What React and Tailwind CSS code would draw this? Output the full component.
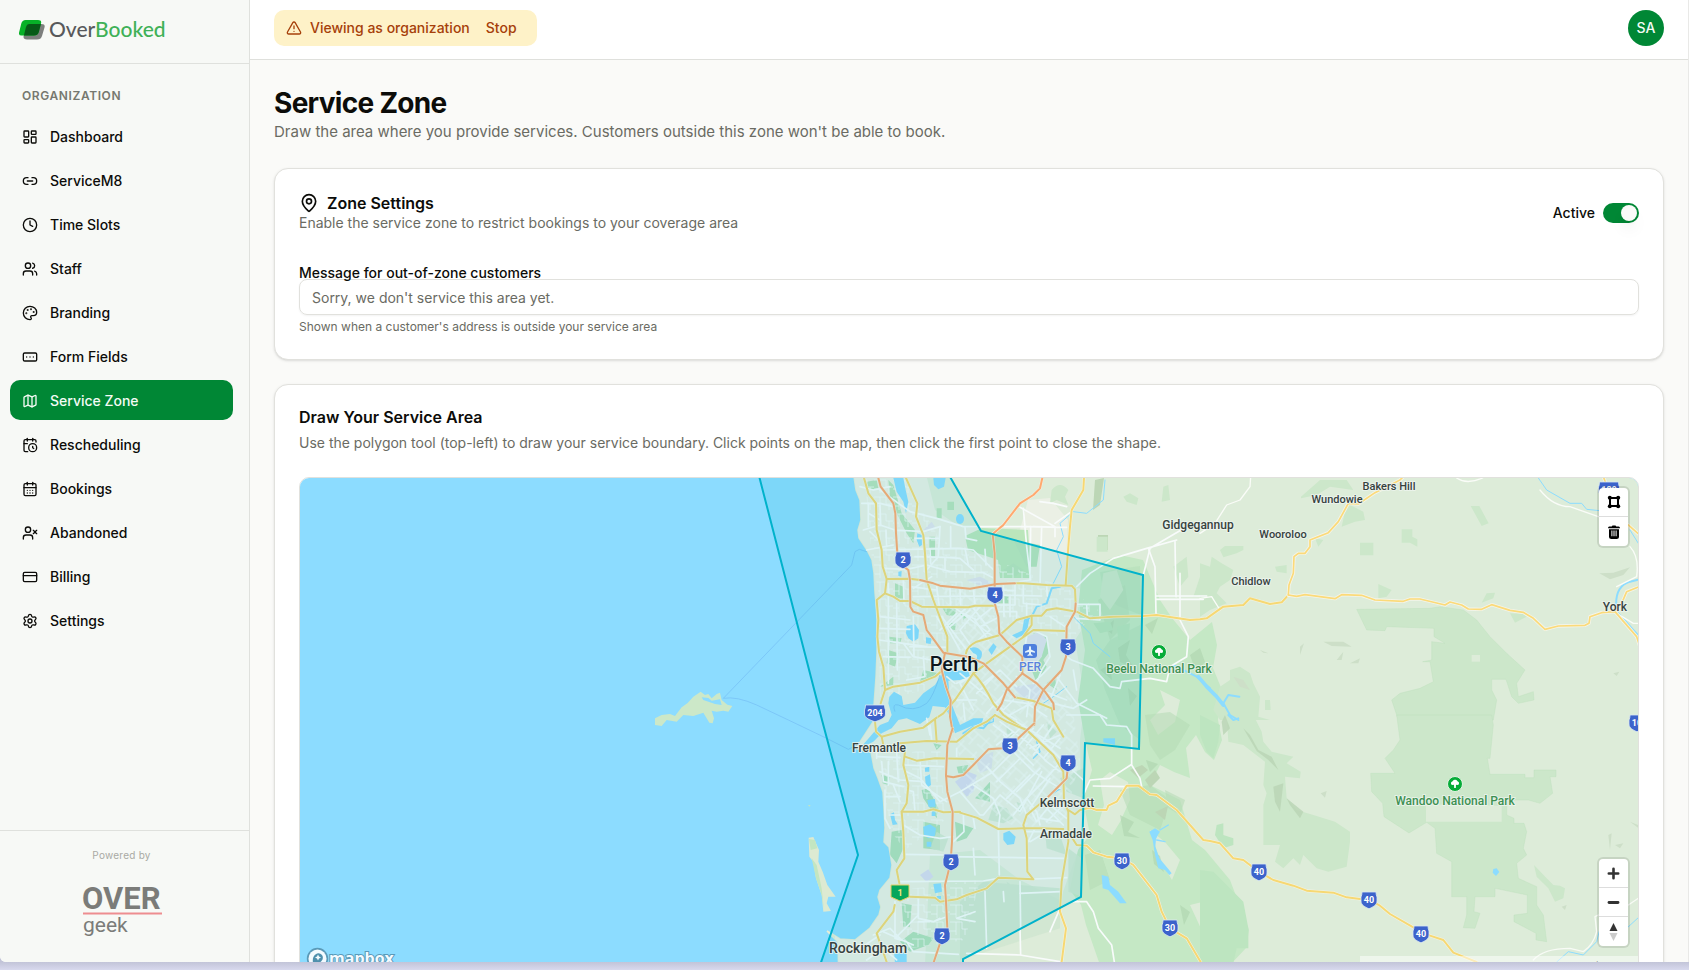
import React, { useState } from "react";
import {
  LayoutDashboard,
  Link2,
  Clock,
  Users,
  Palette,
  RectangleEllipsis,
  Map as MapIcon,
  CalendarClock,
  CalendarDays,
  UserX,
  CreditCard,
  Settings,
  TriangleAlert,
  MapPin,
} from "lucide-react";

const navItems = [
  { label: "Dashboard", icon: LayoutDashboard },
  { label: "ServiceM8", icon: Link2 },
  { label: "Time Slots", icon: Clock },
  { label: "Staff", icon: Users },
  { label: "Branding", icon: Palette },
  { label: "Form Fields", icon: RectangleEllipsis },
  { label: "Service Zone", icon: MapIcon, active: true },
  { label: "Rescheduling", icon: CalendarClock },
  { label: "Bookings", icon: CalendarDays },
  { label: "Abandoned", icon: UserX },
  { label: "Billing", icon: CreditCard },
  { label: "Settings", icon: Settings },
];

function BrandMark() {
  return (
    <svg viewBox="0 0 26 20" className="h-5 w-[26px]" aria-hidden="true">
      <path d="M10 4h12.500q4 0 3 3.500l-2.500 8.500q-1 3.500-5 3.500H8q-4.500 0-3.200-4L7 7q.8-3 3-3z" fill="#7d7f7d" />
      <path d="M6.500 0H19q4 0 3 3.500L19.800 12q-1 3.500-5 3.500H2.500q-3.300 0-2.300-3.500L2.300 3.500Q3.300 0 6.500 0z" fill="#07b127" />
      <path d="M10 4h11.900l-2.100 8q-1 3.500-5 3.500H4.900L7 7q.8-3 3-3z" fill="#075a17" />
    </svg>
  );
}

function Sidebar() {
  return (
    <aside className="flex w-[250px] shrink-0 flex-col border-r border-[#dfe1dd] bg-[#f7f9f6]">
      <div className="flex h-16 shrink-0 items-center gap-1 border-b border-[#dfe1dd] pb-1 pl-[19px]">
        <BrandMark />
        <span className="pb-0.5 text-[21px] leading-6 font-medium text-[#58595b] [font-family:Lato,sans-serif]">
          Over<span className="text-[#3fb157]">Booked</span>
        </span>
      </div>
      <nav className="flex-1 pt-[18px] pr-4 pl-[10px]" aria-label="Organization">
        <h2 className="px-3 py-1 text-xs leading-5 font-semibold tracking-wider text-[#76786f] uppercase">Organization</h2>
        <ul className="mt-1.5 flex flex-col gap-1">
          {navItems.map(({ label, icon: Icon, active }) => (
            <li key={label}>
              <a
                href="#"
                aria-current={active ? "page" : undefined}
                className={
                  active
                    ? "flex h-10 items-center gap-3 rounded-[10px] bg-[#008735] px-3 pt-0.5 text-sm font-medium text-[#f4fbf5]"
                    : "flex h-10 items-center gap-3 rounded-[10px] px-3 pt-0.5 text-sm font-medium text-[#0c0c09]"
                }
              >
                <Icon className="size-4" />
                {label}
              </a>
            </li>
          ))}
        </ul>
      </nav>
      <div className="flex h-[132px] shrink-0 flex-col items-center border-t border-[#dfe1dd] pt-4 pr-4 pl-[10px]">
        <p className="text-[10px] leading-4 tracking-wide text-[#a9aaa4]">Powered by</p>
        <svg viewBox="0 0 80 60" className="mt-4 h-[60px] w-20" role="img" aria-label="OVER geek">
          <text x="0" y="30" fontSize="31" fontWeight="700" fill="#7b7c79" fontFamily="Roboto, sans-serif">OVER</text>
          <path d="M1 34.500h79" stroke="#ee8d90" strokeWidth="2" />
          <text x="1" y="53" fontSize="21" fill="#7b7c79" fontFamily="Roboto, sans-serif">geek</text>
        </svg>
      </div>
    </aside>
  );
}

function Header() {
  return (
    <header className="flex h-[60px] shrink-0 items-start justify-between border-b border-[#dfe0dc] bg-white px-6 pt-[10px]">
      <div className="flex h-9 items-center gap-2 rounded-[10px] bg-[#fef2c8] px-3 text-sm font-medium text-[#a6400a]">
        <TriangleAlert className="size-4" />
        <span>Viewing as organization</span>
        <button type="button" className="px-2">Stop</button>
      </div>
      <button type="button" aria-label="Account menu" className="size-9 rounded-full bg-[#008735] text-sm font-medium text-[#f4fbf5]">
        SA
      </button>
    </header>
  );
}

const streets = {
  north: [
    "M60,60L150,125L230,145L310,170L500,170",
    "M5,100L60,100L100,110",
    "M10,180L60,165L105,180L190,185L240,170",
    "M20,240L100,225M65,240L300,235L340,240L390,290L402,300",
    "M70,295L140,298L200,285L270,305L370,308L402,325",
    "M240,170L235,260L200,300M315,235L325,285M272,170L272,235M375,238L378,285M315,172L318,205L350,212",
    "M50,390L60,440L150,450M55,475L150,478M57,510L130,520L200,530M130,520L160,560L240,575M70,560L150,562M150,530L260,532",
    "M85,340L85,640M110,400L112,600M130,330L132,400M160,440L162,560M190,560L195,620L140,630",
    "M150,350L230,360M230,350L238,410M270,355L272,408M300,358L302,405M340,356L345,407M160,380L400,378",
    "M320,412L260,470L300,540M340,415L390,480L350,515M400,410L350,450L310,430M280,410L400,500M360,410L300,480L335,530M245,440L320,540M410,445L360,470",
    "M345,450L385,510M270,470L330,420M240,480L290,430M230,440L265,500",
    "M465,340L465,405L410,405M490,345L490,400L545,405M512,170L510,330L480,335M490,115L500,230L512,330M545,170L540,345",
    "M480,112L585,170L585,200M500,170L600,172M585,160L630,128M520,170L620,172M540,95L580,100L620,110",
    "M850,315L870,235L980,170M650,350L690,310L760,265L860,235L950,210",
    "M865,235L885,290L888,430M945,215L948,380M888,378L1040,378M888,388L1030,388M960,310L960,440",
    "M960,450L985,500L980,560L930,590L920,635L870,625L785,635L780,655L750,650L700,595L635,570L620,560",
    "M650,403L720,403L720,450L650,445M680,403L682,440",
    "M570,440L615,470M520,480L560,500L570,560L545,600L530,640M500,500L490,560",
    "M590,620L620,660L650,700L740,745M580,700L640,715L680,690M600,615L570,690M555,665L620,690M640,600L650,660",
    "M300,610L430,720L460,690M345,610L300,640L340,720M370,640L420,600L470,650M400,620L350,670M290,640L330,620M260,620L285,640M380,730L480,620M290,690L350,690M310,700L315,750",
    "M430,690L500,700L560,740M470,620L510,660L500,740M420,720L470,750M440,740L530,690M570,590L520,640",
    "M0,50L40,60L90,50M25,100L25,170M60,105L62,165M78,180L80,230M30,185L60,215M25,130L60,150",
    "M165,260L255,262L255,300M215,320L160,355M260,262L300,265L340,300M165,205L235,205M210,235L212,280",
    "M420,360L465,362M410,375L545,378M430,345L432,440M450,375L450,440M410,425L470,425L470,450M500,400L500,437M560,350L562,378",
  ],
  south: [
    "M55,125L120,128M60,170L120,195L190,200M65,140L70,200L130,215M75,225L75,310L90,340M75,245L120,245M50,95L50,130M85,140L85,210",
    "M140,170L180,190L240,260L300,230L360,300L370,300L420,240L480,290L545,170M180,135L185,210L260,260",
    "M130,150L250,155M140,225L160,230L165,290M210,30L215,75M200,10L210,60M290,100L290,130L260,130",
    "M300,230L400,170L420,150L460,110L520,170L600,220M340,210L400,250L420,300L415,340M380,155L420,200L480,250L500,300",
    "M420,20L500,80L560,140L600,170M460,50L410,90M490,30L440,80M520,40L470,100M550,30L500,90M580,30L520,120M600,70L550,130M620,120L550,200L500,250L460,300",
    "M510,100L600,60M430,60L520,150M470,20L600,100M520,50L600,130M400,30L440,60M540,160L470,230M570,190L510,280L530,320L570,270L620,310",
    "M500,250L530,290L540,330M560,280L610,330M540,310L600,320M580,250L600,280L560,320M510,180L440,250M480,130L410,200",
    "M130,330L180,360L240,370L280,365M130,418L260,420M265,425L620,430M310,300L312,350L280,380M340,310L345,340M415,345L418,480M340,400L345,480",
    "M120,500L370,498L415,490M520,492L620,488M480,500L482,640M375,530L380,700M345,590L290,610L345,620M430,530L432,560",
    "M175,550L175,610L220,620L240,610M175,600L105,670M105,560L105,670L140,680L160,710L295,718M220,620L260,605M70,650L160,690M175,620L210,620",
    "M480,535L600,530M500,350L620,350M510,380L560,350L600,360M525,340L505,380",
    "M640,560L680,560L700,590L715,640L755,690L763,741M570,650L600,580M320,715L480,720L600,740M480,640L482,720",
    "M620,0L720,0L740,30L800,35L815,60L815,150L840,190L845,215M690,195L750,190L812,150M700,213L800,215M620,150L670,195M690,195L670,240",
    "M80,100L110,110L115,200M100,210L120,260M90,300L120,300",
    "M40,660L90,640L120,670M0,700L60,660M20,735L70,700L110,735",
  ],
};

const yellowNorth = [
  "M12,24L25,70L48,100L50,180L65,240L68,290L80,327L75,370L50,390L55,450L52,500L57,545L70,590L75,660L62,700",
  "M138,24L172,100L168,140L190,195L195,250L200,330L220,390L262,500L262,550",
  "M80,327L150,326L180,330",
  "M75,370L100,380L120,393L150,393L185,410L325,412L345,407L404,407",
  "M465,340L490,340L560,345L635,347L645,358L647,400",
  "M672,24L670,60L635,120L630,170L625,230L617,345",
  "M318,550Q320,530 350,515L420,495L470,450L515,437L545,437L560,420L590,415L650,425L690,445L760,440L850,438L890,435L990,450L1020,448L1040,445L1090,410L1150,405L1170,385L1230,402L1265,397L1285,375",
  "M620,483L520,480L450,530L380,580L340,610L285,690L250,730L220,750",
  "M515,437L515,465L490,500",
  "M75,660L100,650L180,638L225,620L248,600",
  "M340,610Q370,640 400,700L430,735L480,770",
  "M465,682L520,693L575,715L580,750L610,800",
];
const yellowSouth = [
  "M45,20L48,50L65,65L120,50L190,38L230,8M65,65L70,90M225,12L230,80",
  "M120,85L200,78L290,80L340,40L380,20L405,0",
  "M135,125L170,137L225,130L340,132",
  "M135,110L130,150L145,210L140,265L125,290L130,350L133,430L110,465L118,505",
  "M125,290L190,290L220,283L250,292L300,290M300,293L350,308L415,342L490,340L545,340L610,342",
  "M104,570L100,590L50,655L80,741",
  "M150,545L225,548L240,560L290,553L320,540L380,520L415,488L520,493L502,470L500,370L490,330L500,300L560,250",
  "M405,0L440,20L500,45L580,120L610,170L612,260L625,290L625,380L605,500L600,590L618,640L605,741",
  "M625,285L645,298L660,285L690,278L710,285L740,285L745,272L770,260L800,212L835,212L870,238L890,240L950,285L990,330L1030,375L1050,378L1080,385L1120,430L1150,435L1196,470L1240,495L1300,512L1340,527L1420,533L1460,547L1500,552L1528,555L1560,572L1590,597L1656,635L1710,662L1750,675L1780,713L1850,741",
  "M625,350L650,390L680,392L700,412L740,425L786,430L820,450L890,540L905,590L930,640L980,670L1022,741",
];
const yellowEast = [
  "M265,375L267,345L280,310L282,260L295,250L315,250L330,230L330,210L385,188L415,155L445,100L475,102L525,68L600,30L610,20",
  "M265,375L290,379L315,374L405,386L425,374L485,376L525,390L610,394L630,387L660,387L735,405L750,396L785,405L805,417L845,418L875,404L930,421L970,427L1000,445L1035,478L1075,468L1155,466L1167,460L1170,440L1205,428L1245,425L1310,500L1318,525",
  "M1210,20L1225,60M1285,165L1318,194M1245,425L1265,400L1280,365L1318,350",
];
const orangeNorth = [
  "M55,24L62,50L100,100L106,130L108,190L112,250L118,280L145,300L150,330L151,410L160,425L190,435L200,480L215,500L250,548L330,562L370,580L430,640L465,682",
  "M255,548L245,600L258,650L272,690L270,740L278,785",
  "M180,330L220,340L240,347L330,356L410,342L465,340",
  "M547,24L540,55L520,75L480,100L430,165L398,192L404,250L404,400L415,440L418,490L440,515L487,560L487,610L440,660L425,700L412,720",
  "M487,610L530,640L555,665L580,700L582,718",
  "M647,400L645,425L620,470L618,560L605,600L550,660L525,710L523,765",
];
const orangeSouth = [
  "M278,40L262,90L258,180L262,230L278,290L276,380L272,440L265,470L255,510L258,560L262,640L245,670L220,745",
  "M523,25L475,70L450,95L425,100L385,103L340,150L310,180L280,187L258,183",
  "M622,170L620,190L565,245",
];

const shields = [
  { x: 903, y: 560, n: "2" },
  { x: 995, y: 595, n: "4" },
  { x: 1068, y: 647, n: "3" },
  { x: 875, y: 713, n: "204", wide: true },
  { x: 1010, y: 746, n: "3" },
  { x: 1068, y: 763, n: "4" },
  { x: 951, y: 862, n: "2" },
  { x: 942, y: 936, n: "2" },
  { x: 1122, y: 861, n: "30" },
  { x: 1170, y: 928, n: "30" },
  { x: 1259, y: 872, n: "40" },
  { x: 1369, y: 900, n: "40" },
  { x: 1421, y: 934, n: "40" },
  { x: 1637, y: 723, n: "10" },
  { x: 1609, y: 490, n: "120", wide: true },
];

const places = [
  { x: 954, y: 671, t: "Perth", s: 20, c: "#0d171d", w: 500 },
  { x: 879, y: 752, t: "Fremantle", s: 12 },
  { x: 868, y: 953, t: "Rockingham", s: 14 },
  { x: 1067, y: 807, t: "Kelmscott", s: 12 },
  { x: 1066, y: 838, t: "Armadale", s: 12 },
  { x: 1198, y: 529, t: "Gidgegannup", s: 12 },
  { x: 1283, y: 538, t: "Wooroloo", s: 11 },
  { x: 1337, y: 503, t: "Wundowie", s: 11 },
  { x: 1389, y: 490, t: "Bakers Hill", s: 11 },
  { x: 1251, y: 585, t: "Chidlow", s: 11 },
  { x: 1615, y: 611, t: "York", s: 12 },
  { x: 1159, y: 673, t: "Beelu National Park", s: 12, c: "#3d9052" },
  { x: 1455, y: 805, t: "Wandoo National Park", s: 12, c: "#3d9052" },
  { x: 1030, y: 671, t: "PER", s: 12, c: "#5a83dd" },
];

function Roads({ paths, color, width, casing, casingWidth }) {
  return (
    <g fill="none" strokeLinejoin="round" strokeLinecap="round">
      {casing && paths.map((d) => <path key={"c" + d} d={d} stroke={casing} strokeWidth={casingWidth} />)}
      {paths.map((d) => (
        <path key={d} d={d} stroke={color} strokeWidth={width} />
      ))}
    </g>
  );
}

function Shield({ x, y, n, wide }) {
  const w = wide ? 10.5 : 8;
  return (
    <g transform={`translate(${x} ${y})`}>
      <path
        d={`M${-w + 1},-8H${w - 1}Q${w - 1},-5 ${w},-3V1C${w},5 ${w / 2},7 0,8.800C${-w / 2},7 ${-w},5 ${-w},1V-3Q${-w + 1},-5 ${-w + 1},-8Z`}
        fill="#3c63cb"
        stroke="#dbe8f2"
        strokeWidth=".8"
      />
      <text y="3" textAnchor="middle" fontSize="9" fontWeight="700" fill="#fff">{n}</text>
    </g>
  );
}

function ParkPin({ x, y }) {
  return (
    <g transform={`translate(${x} ${y})`}>
      <circle r="7.500" fill="#07ac39" stroke="#e6f3e3" strokeWidth="1" />
      <path d="M-4,0Q-4.500,-2.200 -2.400,-2.700Q-1.800,-4.500 0,-4.300Q2,-4.500 2.500,-2.700Q4.500,-2.200 4,0Q3.500,1.300 1,.8L.8,4H-.8L-1,.8Q-3.500,1.300 -4,0Z" fill="#fff" />
    </g>
  );
}

function ZoneMap() {
  const nw = "translate(640 470) scale(.33333)";
  const n = "translate(860 470) scale(.33333)";
  const sw = "translate(640 715) scale(.33333)";
  const s = "translate(860 715) scale(.33333)";
  const e = "translate(1200 470) scale(.33333)";
  const se = "translate(1200 715) scale(.33333)";
  const zone = "M757,468L822,720L858,855L817,974L963,974V959L1081,897L1085,743L1139,749L1143,575L981,531L945,468Z";
  const coast =
    "M853,470L856,490L860,500L861,520L858,530L859,538L867,550L872,560L874,573L875,593L876,603L877,620L877,653L876,677L874,705L873,722L860,742L855,748L871,752L874,768L878,778L883,792L884,808L885,828L884,842L889,847L892,865L890,878L880,890L878,897L881,907L879,915L870,928L855,940L840,939L827,931L838,942L839,990H1640V470Z";
  return (
    <svg
      viewBox="300 478 1338 498"
      preserveAspectRatio="xMinYMin slice"
      className="block h-full w-full"
      role="img"
      aria-label="Map of the service area around Perth"
      fontFamily="Roboto, sans-serif"
    >
      <defs>
        <pattern id="grid-a" width="19" height="17" patternUnits="userSpaceOnUse">
          <path d="M0,4H12M6,4V17M12,4V11H19M0,13H6M15,11V17" stroke="#f7fafa" strokeWidth=".7" fill="none" />
        </pattern>
        <pattern id="grid-b" width="17" height="19" patternUnits="userSpaceOnUse" patternTransform="rotate(42)">
          <path d="M0,5H17M5,0V12M11,5V19M0,13H11" stroke="#f7fafa" strokeWidth=".8" fill="none" />
        </pattern>
        <clipPath id="land"><path d={coast} /></clipPath>
      </defs>

      <path d="M300,470H1640V990H300Z" fill="#8cdcff" />
      <path d={coast} fill="#ddecd9" stroke="#e6ecd6" strokeWidth="1.500" />

      <g clipPath="url(#land)">
        <path d="M850,470H925L935,510L960,527L1020,530L1028,500L1050,498L1068,520L1065,585L1085,590L1095,610L1075,640L1085,700L1080,740L1082,840L1060,900L1020,880L980,850L930,855L925,965H835V740L850,720Z" fill="#ebf0e5" />
        {/* Hills and state forest */}
        <path d="M1082,570L1120,555L1143,560L1160,600L1172,618L1190,640L1212,622L1217,645L1213,668L1222,690L1218,720L1222,740L1214,760L1205,752L1196,735L1186,748L1190,778L1174,772L1160,765L1150,785L1180,800L1192,840L1205,850L1215,862L1230,880L1249,930L1246,948L1230,965H1100L1086,925L1081,905L1070,890L1078,850L1090,835L1083,800L1092,770L1085,740L1078,700L1085,650L1078,610Z" fill="#c5e8c5" />
        <path d="M1100,780L1110,772L1128,782L1130,800L1120,822L1112,835L1098,825L1104,805Z M1150,830L1165,842L1180,860L1172,880L1160,860Z M1190,905L1210,900L1218,920L1204,935Z M1150,720L1165,705L1160,690L1180,700L1175,722L1158,735Z" fill="#ddecd9" />
        <path d="M1096,660L1110,640L1140,625L1140,740L1120,725L1105,690Z M1100,572L1140,566L1141,615L1118,606L1104,595Z" fill="#b6dfb9" opacity=".6" />
        <path d="M965,536L982,528L1028,530L1031,578L1000,578L998,560L968,550Z" fill="#bbe6bb" />
        <path d="M1145,715L1170,712L1190,725L1175,750L1160,760L1150,745Z M1120,790L1150,785L1170,800L1160,830L1130,815Z M1085,855L1100,850L1110,880L1090,890Z M1098,600L1125,585L1130,620L1110,640Z M1165,790L1185,800L1180,815L1168,808Z" fill="#b4dab5" opacity=".55" />
        <path d="M1118,648L1130,640L1126,655L1134,668L1120,662Z M1100,670L1110,664L1112,680Z M1190,655L1200,648L1205,662L1196,672Z M1145,625L1158,618L1152,634Z M1120,815L1134,822L1128,832L1140,838L1124,836Z M1152,850L1160,856L1164,872L1154,864Z M1180,905L1190,912L1184,925Z M1146,760L1158,764L1150,772Z M1128,688L1137,696L1130,706Z M1104,628L1114,620L1112,634Z" fill="#aed3ae" opacity=".6" />
        <path d="M1095,480L1104,478L1100,505L1093,510Z M1098,535H1108V550H1098Z M1145,780L1155,770L1160,778L1150,788Z M1130,770L1142,765L1148,770L1138,778Z M1155,812L1168,806L1165,820Z" fill="#bcd6b5" />
        <g transform={n} fill="#cce7ca">
          <path d="M575,60Q600,30 625,60L615,80L625,105L590,90L570,100Z M790,80L810,70L835,85L830,105L800,95Z M910,50L925,45L930,90L905,95Z M710,200H743V245H710Z M940,290L980,260L985,320L960,350Z M1000,380L1050,370V300L1020,320Z M730,310L770,300L790,360L750,420L720,380Z" />
        </g>
        <g transform={e} fill="#cce7ca">
          <path d="M0,280L30,290L35,260L65,280L100,300L90,330L60,350L50,370L80,400L30,420L0,440Z M60,240L75,228H130V240L110,250L70,262Z M480,218H520V256H480Z M605,178H637V200L652,208V230L630,218H605Z M812,108H838L866,160L845,168Z M535,342L575,360L560,380L535,385Z M845,398L860,370L885,368L880,385Z M930,430L970,432L980,440L945,458Z M425,170L440,100L490,125L495,150L465,155Z M303,80L360,30H440L460,60L390,50L350,75L303,85Z M345,205L370,210L355,230Z M225,290L260,285V310L230,305Z M90,600L120,590L150,610L160,640L180,680L175,740L210,750H60L40,720L60,650L90,630Z M195,690L210,690L212,720L195,720Z" />
          <path d="M470,418L690,415L720,410L790,420L830,450L870,500L920,550L975,600L950,640L955,680L1000,665L1002,690L955,700L935,680L918,628L875,628L875,660L890,690L880,750H595L575,690L600,670L660,655L700,635L690,575L668,575L695,570L695,515L735,520L702,500V475L560,470L555,482L500,480Z" stroke="#b8dfba" strokeWidth="1" />
          <path d="M815,555H840V575H815Z" fill="#ddecd9" />
        </g>
        <g transform={se} fill="#cce7ca">
          <path d="M590,0H875L880,30L870,130H862L870,178H975V188H1002V165H1068V185H1050L1058,235L1020,265L985,255H945L920,270V300L942,310V325H972L980,350L970,400L980,420L950,445L955,490L1010,515V570L1030,600L1040,680L1008,675V655L942,620V600L982,595V540L885,520V545H825L822,590L840,595L825,640L790,638L800,600V545H755V440L710,415L705,340L680,322L627,354L552,305L548,265L515,230L512,175L585,175L555,130L580,105L600,75Z" stroke="#b8dfba" strokeWidth="1" />
          <path d="M678,268L905,272V320H678Z" fill="#ddecd9" />
          <path d="M1002,450L1040,490L1060,510L1080,512L1095,520L1090,550L1065,560L1045,520L1010,485Z" />
          <path d="M80,0H160L185,50L190,80L215,110L280,125L260,145L302,170L300,190L255,185L260,250L290,285L340,300L405,320L450,350V380L440,455L385,470L350,460L310,420L300,450L280,430L250,460L225,440L240,390H190V270L200,235L190,210L195,140L130,90L85,80Z" />
          <path d="M0,0L60,30L55,80L40,130L20,110L0,60Z M50,330L70,325V360L100,370V390L70,400L45,360Z M0,465L40,470L100,530L130,560L145,640V700H110L100,745H0Z" fill="#bde5c0" />
          <path d="M75,0L90,40L70,60L65,20Z M130,40L150,60L175,105L215,125L235,165L205,135L170,108Z M220,215L250,205L240,290L225,260Z M260,250L310,290L300,310L270,270Z" fill="#b9d4b4" opacity=".8" />
        </g>
        <g transform={e} fill="#cddfc8">
          <path d="M1198,310L1240,308L1290,292L1270,315L1230,328Z M370,515L430,515L455,530L395,528Z M410,570L430,545L425,570Z M450,580L480,565L475,580Z M300,530L312,520L300,555Z M180,540L205,550L190,548Z M100,620L130,630L150,660L120,650Z M1240,610L1258,605L1250,618Z" />
        </g>
        <g transform={se} fill="#cddfc8">
          <path d="M1225,360L1235,355L1230,405Z M1245,390L1270,385L1260,400Z M1290,320L1314,330V338Z M1085,575L1100,570L1095,585Z M362,235L380,228L375,248Z" />
        </g>
        {/* Parks */}
        <g transform={n} fill="#b8e3bb">
          <path d="M20,35L50,30L55,55L25,60Z M85,30L100,45L125,130L165,180L160,220L140,190L110,130L90,80Z M208,200H225V265L208,255Z M262,95H282V120H262Z M230,115H245V145H230Z M105,340L130,350V390L105,380Z M88,500L125,505L120,520L90,520Z M85,540L115,550L105,590L80,580Z M245,410H290L285,440L260,435Z M268,458L290,460L285,480L268,478Z M100,620L60,650L100,645Z M430,300L460,280L490,300L465,320Z M460,210L540,225L530,290L500,290Z M520,490L560,500L565,550L550,570L560,590L530,640L515,600L545,560Z M190,600L235,610L215,625L180,635Z M300,430L320,440L310,450Z M410,375L445,380V400H410Z M560,640L585,620L590,660Z M700,460L750,455L760,480L720,490Z M770,470L810,460L805,510L775,510Z" />
        </g>
        <g transform={sw} fill="#b2e0bb">
          <path d="M725,180L750,185L745,210L728,205Z M685,308L715,295L728,265L735,310L715,320Z M755,350L785,345L790,400L770,445L750,420Z M845,225L865,220L895,280L890,310L850,250Z M850,320L900,330V405L850,400Z M785,565L815,570L810,635L790,635Z M780,680L820,650L880,670L865,690L810,710Z M880,85L905,90L890,105Z M950,155L985,150L975,175L955,175Z M1005,250L1050,200V260Z M945,320L1000,340L980,370L950,380Z" />
        </g>
        <g transform={s} fill="#cfe6cf">
          <path d="M400,270L440,280L460,310L430,325L385,315Z M470,260L490,270L480,300Z M600,190L670,160V250L620,230Z M555,350L600,360L620,420L560,400Z M230,350L265,370L250,410L210,400Z M370,500L480,510L600,520V640L300,735V560Z M440,30L460,60L440,75Z M560,20L590,50L570,70Z M625,400L665,430V545L625,530Z M440,500L470,520L450,550Z" opacity=".8" />
        </g>
        <g transform={n} fill="#e2e4ee">
          <path d="M500,500L540,485L560,510L545,560L510,590L480,560Z M460,650L540,640L560,690L490,695Z M320,330L360,320L400,340L370,352Z M190,180L215,155L225,170L205,185Z" />
        </g>
        <g transform={s} fill="#dadcf0">
          <path d="M285,200L325,170L350,180L340,230L320,245Z M180,480L205,463L220,485L200,502Z" />
          <path d="M345,130L400,110L395,160L360,175Z" opacity=".6" />
        </g>
        {/* Street texture */}
        <path d="M865,478H905L940,540L990,560L995,620L930,650L925,690L880,700L878,590L872,560Z M995,560L1070,590L1098,610L1070,640L1010,620Z M880,760L940,745L945,820L905,850L890,830Z M900,890L980,880L965,940L900,950Z" fill="url(#grid-a)" />
        <path d="M940,580L1000,600L1030,680L1070,690L1080,760L1065,820L1020,830L970,800L945,700L960,660Z" fill="url(#grid-b)" />
      </g>

      {/* Islands */}
      <path transform={nw} d="M45,745L65,735L90,732L105,738L125,712L142,700L160,680L182,665L195,675L205,672L215,685L230,672L240,668L245,690L262,704L277,708L265,725L250,722L230,725L215,722L222,745L218,760L208,758L200,745L190,728L160,738L130,735L110,755L80,750L65,768L45,765Z" fill="#cce8c8" />
      <path transform={nw} d="M185,682L205,684L215,692L240,688L245,705L225,702L190,690Z" fill="#8cdcff" />
      <path transform={sw} d="M506,368L520,366L537,405L535,440L548,470L562,510L587,545L565,545L560,565L573,588L550,590L545,540L528,490L520,440L508,425Z" fill="#ddead2" />
      <path transform={sw} d="M507,372L525,375L532,400L512,405Z M515,430L530,450L545,520L552,588L545,540L528,490Z M504,270L512,270L508,275Z" fill="#c3e6c1" />

      {/* Rivers and lakes */}
      <g fill="#8cdcff">
        <path transform={nw} d="M748,680L762,665L785,678L790,705L825,698L850,670L885,645L905,612L915,600L985,603L990,620L960,630L925,632L930,690L960,765L1000,745L1030,745L1025,760L990,770L945,790L930,740L915,712L878,708L868,742L840,762L800,745L775,750L755,775L725,790L700,815L660,835L690,800L720,765L745,755L755,735L745,700Z" />
        <path transform={nw} d="M760,24H790L797,60L805,95L798,130L790,95L770,65Z M832,190L845,195L846,225L838,230L830,210Z M880,24H917L912,50L895,58L882,45Z" />
        <ellipse cx="960" cy="519" rx="4" ry="5" />
        <path transform={nw} d="M800,468L825,463L837,480L835,505L820,515L805,505L798,490Z M858,502L875,505L872,522L858,520Z M775,305L785,303L784,320L775,318Z" />
        <path transform={n} d="M328,535Q350,525 365,545Q370,570 345,575Q360,555 340,550Z M385,540L400,520L410,530L395,555Z M456,496L490,480L500,440L510,435L500,490L470,505Z" />
        <path transform={sw} d="M855,158L868,155L868,170L855,170Z M855,185L870,178L873,210L858,220Z M862,255L885,252L887,275L866,276Z M875,290H886V303H875Z M850,335L870,328L888,340L885,362L865,370L852,360Z M860,380H874V395H860Z M880,507L903,505L906,530L885,535Z M890,543H903V552H890Z M750,298L762,292L765,315L773,328L758,330Z M762,712H800V745H765Z" />
        <path transform={s} d="M430,355L448,347L467,365L462,387L442,390L430,375Z M725,480L745,485L750,510L775,530L800,565L780,565L745,525L728,520Z M868,350L885,340L900,350L895,358L888,372L886,395L898,430L925,462L935,475L928,480L915,465L895,460L885,420L878,375Z M730,70L765,70V90L730,82Z" />
        <path transform={se} d="M880,462L890,460L898,471L888,483L878,473Z" />
      </g>
      <g fill="none" stroke="#8cdcff" strokeLinecap="round" strokeLinejoin="round">
        <path transform={n} strokeWidth="6" d="M600,350L575,355L560,400L530,410L515,440L495,450L490,480M940,585L1010,620L1050,655M310,790L340,770L370,775L400,740" />
        <path transform={n} strokeWidth="3" d="M620,650L580,680L550,700M735,30L730,90L680,130L640,125L600,160L610,200L590,240L605,290L580,340M640,440L690,490L700,520L750,560" />
        <path transform={e} strokeWidth="11" d="M-5,620L20,650L50,680L70,705" />
        <path transform={e} strokeWidth="6" d="M70,700L90,735L115,750M70,700L85,675L118,680M1250,425Q1240,350 1290,335L1318,328M1255,430L1318,500" />
        <path transform={e} strokeWidth="3" d="M1015,24L1040,60L1110,100H1145L1160,118L1200,122M1290,180L1318,225" />
        <path transform={se} strokeWidth="6" d="M85,0L100,15L115,10" />
        <path transform={se} strokeWidth="3" d="M1070,741L1105,710L1150,720L1190,680L1200,640M1280,640L1318,605" />
        <path transform={s} strokeWidth="4" d="M370,30L400,20L400,0M520,130L540,110L530,80M900,345L925,330M890,375L915,380M570,240L600,222" />
      </g>
      <path transform={nw} fill="none" stroke="#74bdf5" strokeWidth="2" d="M250,685L635,285L645,245L658,238L680,245M250,685Q290,678 350,705L445,750L560,805L625,838L660,820M900,615Q880,680 860,700Q820,730 775,705Q755,700 765,725" />

      {/* Roads */}
      <g transform={n}><Roads paths={streets.north} color="#f8fbfb" width="5" /></g>
      <g transform={s}><Roads paths={streets.south} color="#f8fbfb" width="5" /></g>
      <g transform={e}>
        <Roads
          paths={[
            "M152,20L150,50L120,90L80,105L45,160L0,190",
            "M1020,60Q1060,110 1110,110L1195,140M1290,230Q1318,260 1310,320L1250,350M1250,430L1300,460H1318M770,24Q800,45 848,24M0,385L35,380L60,420",
          ]}
          color="#fafcf8"
          width="4"
        />
      </g>
      <g transform={se}><Roads paths={["M1000,735Q1030,700 1110,700L1150,710Q1180,690 1190,650L1185,605L1195,600M1285,570L1318,548"]} color="#f8fbf6" width="4" /></g>
      <g transform={n}><Roads paths={yellowNorth} color="#f6d873" width="6" casing="#f4f4e4" casingWidth="9" /></g>
      <g transform={s}><Roads paths={yellowSouth} color="#f6d873" width="6" casing="#f4f4e4" casingWidth="9" /></g>
      <g transform={e}><Roads paths={yellowEast} color="#fbda79" width="5" casing="#f4f5ea" casingWidth="10" /></g>
      <g transform={n}><Roads paths={orangeNorth} color="#ffa96f" width="6" casing="#f4efe0" casingWidth="9" /></g>
      <g transform={s}><Roads paths={orangeSouth} color="#ffa96f" width="6" casing="#f4efe0" casingWidth="9" /></g>

      <path d={zone} fill="#00b0c8" fillOpacity=".1" stroke="#00b2cb" strokeWidth="2" />

      {/* Markers and place names */}
      {shields.map((m) => <Shield key={`${m.x}-${m.y}`} {...m} />)}
      <path d="M891,885H909V897L900,901L891,897Z" fill="#05a65c" stroke="#e6cf63" strokeWidth="1" />
      <text x="900" y="896" textAnchor="middle" fontSize="9" fontWeight="700" fill="#f6e27c">1</text>
      <ParkPin x={1159} y={652} />
      <ParkPin x={1455} y={784} />
      <g transform="translate(1030 651)">
        <rect x="-7" y="-7" width="14" height="14" rx="3" fill="#4e7fdd" />
        <path d="M0,-5Q1,-5 1,-3.500V-1.500L5,.5V1.800L1,1V3L2.500,4V5L0,4.500L-2.500,5V4L-1,3V1L-5,1.800V.5L-1,-1.500V-3.500Q-1,-5 0,-5Z" fill="#e5f3fa" />
      </g>
      {places.map((p) => (
        <text
          key={p.t}
          x={p.x}
          y={p.y}
          textAnchor="middle"
          fontSize={p.s}
          fontWeight={p.w || 500}
          fill={p.c || "#37423f"}
          stroke="#eef5f0"
          strokeOpacity=".8"
          strokeWidth="2"
          strokeLinejoin="round"
          paintOrder="stroke"
        >
          {p.t}
        </text>
      ))}
    </svg>
  );
}

function MapControls() {
  const group = "absolute right-[10px] flex w-[29px] flex-col divide-y divide-[#dddddd] overflow-hidden rounded bg-white shadow-[0_0_0_2px_rgba(0,0,0,0.1)]";
  const button = "flex h-[29px] items-center justify-center";
  return (
    <>
      <div className={group + " top-[10px]"}>
        <button type="button" aria-label="Polygon tool" className={button}>
          <svg viewBox="0 0 20 20" className="size-5" aria-hidden="true">
            <path d="M6 6h8v8H6z" fill="none" stroke="#000" strokeWidth="2" />
            <g fill="#000"><circle cx="5.800" cy="5.800" r="2" /><circle cx="14.200" cy="5.800" r="2" /><circle cx="5.800" cy="14.200" r="2" /><circle cx="14.200" cy="14.200" r="2" /></g>
          </svg>
        </button>
        <button type="button" aria-label="Delete" className={button}>
          <svg viewBox="0 0 20 20" className="size-5" aria-hidden="true">
            <path d="M8.500 3.400h3l.8 1h2.400q1.300 0 1.300 1.800H4q0-1.800 1.300-1.800h2.400zM5 7.300h10v7.200q0 2.500-2.500 2.500h-5Q5 17 5 14.500zm2.400 1.200v5.800h1V8.500zm2.100 0v5.800h1V8.500zm2.100 0v5.800h1V8.500z" fill="#000" fillRule="evenodd" />
          </svg>
        </button>
      </div>
      <div className={group + " bottom-[30px]"}>
        <button type="button" aria-label="Zoom in" className={button}>
          <svg viewBox="0 0 29 29" className="size-[29px]" aria-hidden="true"><path d="M14.500 9.800v9.400M9.800 14.500h9.400" stroke="#333" strokeWidth="2.600" strokeLinecap="round" /></svg>
        </button>
        <button type="button" aria-label="Zoom out" className={button}>
          <svg viewBox="0 0 29 29" className="size-[29px]" aria-hidden="true"><path d="M10 14.500h9" stroke="#333" strokeWidth="2.800" strokeLinecap="round" /></svg>
        </button>
        <button type="button" aria-label="Reset bearing to north" className={button}>
          <svg viewBox="0 0 29 29" className="size-[29px]" aria-hidden="true">
            <path d="M10.500 14l4-8 4 8z" fill="#333" />
            <path d="M10.500 16l4 8 4-8z" fill="#ccc" />
          </svg>
        </button>
      </div>
      <a href="https://www.mapbox.com/" aria-label="Mapbox" className="absolute bottom-[5px] left-[5px]">
        <svg viewBox="0 0 92 24" className="h-6 w-[92px]" aria-hidden="true">
          <circle cx="12.500" cy="11.500" r="9.200" fill="none" stroke="#5a9ab8" strokeWidth="3" />
          <circle cx="12.500" cy="11.500" r="9" fill="#f4fbff" />
          <path d="M8 16q-1-6 2.500-8.500t6.500.5q2 3-.5 6T8 16z" fill="#4f90ad" />
          <path d="M13 7.500l1 2 2 1-2 1-1 2-1-2-2-1 2-1z" fill="#f4fbff" />
          <text x="24" y="16.500" fontSize="16" fontWeight="700" fontFamily="Open Sans, sans-serif" fill="#f4fbff" stroke="#5a9ab8" strokeWidth="2" paintOrder="stroke">mapbox</text>
        </svg>
      </a>
      <div className="absolute right-0 bottom-0 h-5 bg-white/50 px-[5px] text-xs leading-[22px] text-black/75">
        © Mapbox © OpenStreetMap Improve this map
      </div>
    </>
  );
}

function Card({ children }) {
  return (
    <section className="rounded-[14px] border border-[#e1e1dd] bg-white p-6 shadow-sm">{children}</section>
  );
}

export default function App() {
  const [active, setActive] = useState(true);
  const [message, setMessage] = useState("");
  return (
    <div className="flex h-screen flex-col bg-linear-to-b from-[#c2c4d8] from-[calc(100%-8px)] to-[#d8d9ee] text-[#0c0c09] [font-family:Inter,sans-serif]">
      <div className="mr-px mb-2 flex min-h-0 flex-1 overflow-hidden rounded-bl-md bg-[#fafaf8] shadow-[1px_0_0_#e9e9e7]">
        <Sidebar />
        <div className="flex min-w-0 flex-1 flex-col">
          <Header />
          <main className="flex min-h-0 flex-1 flex-col gap-6 overflow-hidden p-6">
            <div>
              <h1 className="pt-0.5 text-[28px] leading-[34px] font-bold tracking-tight">Service Zone</h1>
              <p className="text-[15px] leading-6 text-[#6a6b63]">
                Draw the area where you provide services. Customers outside this zone won't be able to book.
              </p>
            </div>

            <Card>
              <div className="flex items-center justify-between">
                <div>
                  <h2 className="flex h-5 items-center gap-2 text-base leading-none font-semibold">
                    <MapPin className="size-5" />
                    Zone Settings
                  </h2>
                  <p className="text-sm text-[#6a6b63]">Enable the service zone to restrict bookings to your coverage area</p>
                </div>
                <div className="flex items-center gap-2">
                  <label htmlFor="zone-active" className="text-sm font-medium">Active</label>
                  <input
                    id="zone-active"
                    type="checkbox"
                    role="switch"
                    checked={active}
                    onChange={(ev) => setActive(ev.target.checked)}
                    className="flex h-5 w-9 appearance-none items-center rounded-full bg-[#d5d6d0] px-0.5 before:size-4 before:rounded-full before:bg-[#fafaf8] before:shadow-lg checked:justify-end checked:bg-[#008735]"
                  />
                </div>
              </div>
              <label htmlFor="zone-message" className="mt-[30px] block text-sm font-medium">
                Message for out-of-zone customers
              </label>
              <input
                id="zone-message"
                type="text"
                value={message}
                onChange={(ev) => setMessage(ev.target.value)}
                placeholder="Sorry, we don't service this area yet."
                className="-mt-1 block h-9 w-full rounded-lg border border-[#e1e1dd] px-3 text-sm shadow-xs placeholder:text-[#6a6b63]"
              />
              <p className="mt-1 text-xs text-[#6a6b63]">Shown when a customer's address is outside your service area</p>
            </Card>

            <Card>
              <h2 className="text-base leading-none font-semibold">Draw Your Service Area</h2>
              <p className="mt-2 text-sm text-[#6a6b63]">
                Use the polygon tool (top-left) to draw your service boundary. Click points on the map, then click the first point to close the shape.
              </p>
              <div className="relative mt-6 h-[500px] overflow-hidden rounded-[10px] border border-[#e1e1dd]">
                <ZoneMap />
                <MapControls />
              </div>
            </Card>
          </main>
        </div>
      </div>
    </div>
  );
}
